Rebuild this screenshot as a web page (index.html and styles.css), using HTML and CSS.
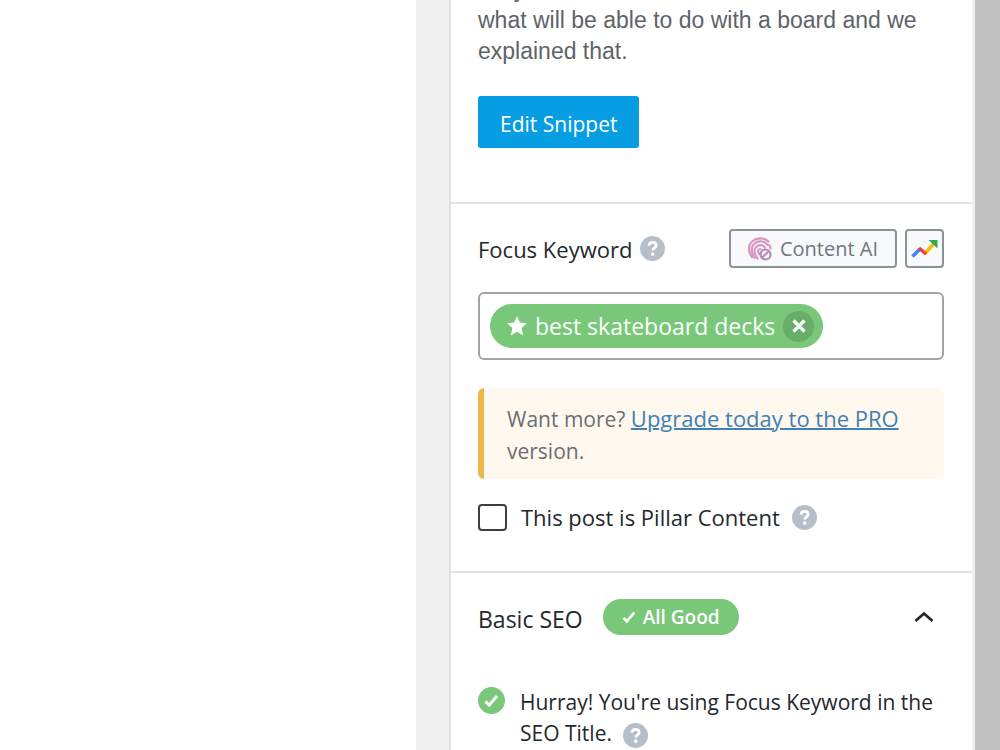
FILE: index.html
```html
<!DOCTYPE html>
<html lang="en">
<head>
  <meta charset="UTF-8" />
  <meta name="viewport" content="width=device-width, initial-scale=1.0"/>
  <title>Edit Post - SEO</title>
  <link rel="stylesheet" href="styles.css">
</head>
<body>

  <!-- Shared icons -->
  <svg class="sprite" aria-hidden="true">
    <symbol id="icon-help" viewBox="0 0 24 24">
      <circle cx="12" cy="12" r="12" fill="#b5bfc9"/>
      <path d="M8.6 9.2C8.8 7.1 10.2 6.1 12.1 6.1c2 0 3.4 1.1 3.4 2.8 0 2.6-3.2 2.5-3.2 5.1" fill="none" stroke="#fff" stroke-width="2.6"/>
      <circle cx="12.2" cy="17.4" r="1.7" fill="#fff"/>
    </symbol>
    <symbol id="icon-check" viewBox="0 0 16 14">
      <path d="M1.5 8l4 4L14 2" fill="none" stroke="#fff" stroke-width="3.2"/>
    </symbol>
  </svg>

  <div class="layout">
    <main class="editor"></main>

    <aside class="sidebar">
      <section class="snippet">
        <p>Only if, we knew, as the new riders will see what will be able to do with a board and we explained that.</p>
        <button type="button" class="btn-primary">Edit Snippet</button>
      </section>

      <section class="keyword">
        <div class="keyword-head">
          <h2>Focus Keyword</h2>
          <svg class="help"><use href="#icon-help"/></svg>
          <div class="tools">
            <button type="button" class="btn-tool">
              <svg class="ai-icon" viewBox="0 0 24 24" fill="none" stroke-width="2.2" stroke-linecap="round">
                <g stroke="#d795bf">
                  <path d="M4 20C0 15 0 8 4 4.500S15-.500 20.500 4.500"/>
                  <path d="M6.500 21C3 15.500 3 9.500 6.500 6.500S16.500 3.500 20 8"/>
                  <path d="M9.500 21.500C6 17 5.500 12 8.500 9.500s7-1.500 8.500 1"/>
                  <path d="M11 17c-2-3-.500-5 1.500-5"/>
                  <path d="M21.500 8.500c.800 1 1 2 1 3"/>
                </g>
                <g stroke="#b78abc">
                  <circle cx="17.500" cy="17.500" r="5"/>
                  <path d="M14.500 20l5.500-5"/>
                </g>
              </svg>
              Content AI
            </button>
            <button type="button" class="btn-tool btn-trends" aria-label="Trends">
              <svg class="trends-icon" viewBox="0 0 27 20" fill="none" stroke-width="3.600">
                <path d="M1.500 17.500L9 10" stroke="#4285f4"/>
                <path d="M13.500 15l9-10" stroke="#fbbc04"/>
                <path d="M8 9l7 6" stroke="#ea4335"/>
                <path d="M17.500 1H26.500V9.500z" fill="#34a853"/>
              </svg>
            </button>
          </div>
        </div>

        <div class="keyword-box">
          <span class="tag">
            <svg class="star" viewBox="0 0 20 20"><path d="M10 0l2.900 6.600 7.100.700-5.400 4.800L16.200 19.500 10 15.700 3.800 19.500l1.600-7.400L0 7.300l7.100-.700z" fill="#fff"/></svg>
            best skateboard decks
            <button type="button" class="tag-remove" aria-label="Remove keyword">
              <svg viewBox="0 0 14 14"><path d="M1.500 1.500l11 11M12.500 1.500l-11 11" stroke="#fff" stroke-width="3.200"/></svg>
            </button>
          </span>
        </div>

        <p class="notice">Want more? <a href="#">Upgrade today to the PRO</a> version.</p>

        <div class="pillar">
          <input type="checkbox" id="pillar-content">
          <label for="pillar-content">This post is Pillar Content</label>
          <svg class="help"><use href="#icon-help"/></svg>
        </div>
      </section>

      <section class="basic">
        <div class="basic-head">
          <h2>Basic SEO</h2>
          <span class="badge"><svg><use href="#icon-check"/></svg>All Good</span>
          <button type="button" class="toggle" aria-label="Toggle panel">
            <svg viewBox="0 0 20 12"><path d="M1.500 10L10 2.500 18.500 10" fill="none" stroke="#23282d" stroke-width="2.800"/></svg>
          </button>
        </div>
        <ul class="tests">
          <li>
            <span class="test-ok"><svg><use href="#icon-check"/></svg></span>
            <span>Hurray! You're using Focus Keyword in the SEO Title. <svg class="help"><use href="#icon-help"/></svg></span>
          </li>
        </ul>
      </section>
    </aside>

    <div class="scrollbar"></div>
  </div>

</body>
</html>
```

FILE: styles.css
```css
* {
  box-sizing: border-box;
}

body {
  margin: 0;
  font-family: 'Segoe UI', 'Open Sans', sans-serif;
  font-size: 22px;
  line-height: 32px;
  background: #fff;
  color: #23282d;
}

h2, p, ul {
  margin: 0;
  padding: 0;
}

h2 {
  font-size: 22px;
  font-weight: 500;
}

button {
  font-family: inherit;
  font-size: 21px;
  padding: 0;
  border: none;
  cursor: pointer;
}

svg {
  display: block;
  flex: none;
}

.sprite {
  position: absolute;
  width: 0;
  height: 0;
}

.layout {
  display: flex;
  height: 100vh;
  overflow: hidden;
}

.editor {
  flex: 1;
  border-right: 33px solid #f0f0f0;
}

.sidebar {
  width: 526px;
  border-left: 2px solid #e0e0e0;
  border-right: 3px solid #f0f0f0;
}

.scrollbar {
  width: 25px;
  background: #c1c1c1;
}

section {
  padding: 0 28px 0 27px;
}

section + section {
  border-top: 2px solid #e2e4e7;
}

.help {
  width: 25px;
  height: 25px;
}

/* Snippet preview */
.snippet {
  margin-top: -26px;
  padding-bottom: 54px;
}

.snippet p {
  font-family: 'Liberation Sans', Arial, sans-serif;
  font-size: 23px;
  line-height: 31px;
  color: #5f6368;
}

.btn-primary {
  margin-top: 29px;
  padding: 4px 22px 0;
  height: 52px;
  background: #069de3;
  color: #fff;
  border-radius: 3px;
}

/* Focus keyword */
.keyword {
  padding-top: 25px;
  padding-bottom: 38px;
}

.keyword-head {
  display: flex;
  align-items: center;
  gap: 8px;
}

.tools {
  display: flex;
  gap: 8px;
  margin-left: auto;
}

.btn-tool {
  display: flex;
  align-items: center;
  gap: 8px;
  height: 39px;
  padding: 0 17px;
  background: #f8f9fa;
  border: 2px solid #8c929c;
  border-radius: 4px;
  color: #6c7781;
  font-size: 20px;
}

.btn-trends {
  padding: 0 4px;
}

.ai-icon {
  width: 24px;
  height: 24px;
}

.trends-icon {
  width: 27px;
  height: 20px;
}

.keyword-box {
  display: flex;
  margin-top: 24px;
  padding: 10px;
  border: 2px solid #a0a3ae;
  border-radius: 6px;
}

.tag {
  display: flex;
  align-items: center;
  gap: 8px;
  height: 44px;
  padding: 0 9px 0 17px;
  border-radius: 22px;
  background: #79c879;
  color: #fff;
  font-size: 23px;
}

.star {
  width: 20px;
  height: 20px;
}

.tag-remove {
  display: flex;
  align-items: center;
  justify-content: center;
  width: 31px;
  height: 31px;
  border-radius: 50%;
  background: #68ad68;
}

.tag-remove svg {
  width: 14px;
  height: 14px;
}

.notice {
  margin-top: 28px;
  padding: 14px 20px 12px 23px;
  border-left: 6px solid #efb64c;
  border-radius: 6px;
  background: #fef8ee;
  color: #6b6f73;
  font-size: 21px;
}

.notice a {
  color: #4180b5;
  font-size: 22px;
  font-weight: 500;
  text-decoration-thickness: 2px;
}

.pillar {
  display: flex;
  align-items: center;
  margin-top: 22px;
}

.pillar input {
  appearance: none;
  width: 29px;
  height: 27px;
  margin: 0 14px 0 0;
  border: 2px solid #3c4043;
  border-radius: 4px;
  background: #fff;
}

.pillar label {
  margin-right: 12px;
  font-weight: 500;
}

/* Basic SEO */
.basic {
  padding-top: 26px;
}

.basic-head {
  display: flex;
  align-items: center;
}

.basic-head h2 {
  padding-top: 4px;
  font-size: 23px;
}

.badge {
  display: flex;
  align-items: center;
  gap: 7px;
  height: 36px;
  margin-left: 20px;
  padding: 0 19px;
  border-radius: 18px;
  background: #79c879;
  color: #fff;
  font-size: 19px;
  font-weight: 600;
}

.badge svg {
  width: 14px;
  height: 12px;
}

.toggle {
  margin-left: auto;
  padding: 10px;
  background: none;
}

.toggle svg {
  width: 20px;
  height: 12px;
}

.tests {
  margin-top: 52px;
  list-style: none;
}

.tests li {
  display: flex;
  gap: 15px;
  font-size: 21px;
  line-height: 31px;
}

.test-ok {
  display: flex;
  flex: none;
  align-items: center;
  justify-content: center;
  width: 27px;
  height: 27px;
  border-radius: 50%;
  background: #79c879;
}

.test-ok svg {
  width: 15px;
  height: 13px;
}

.tests .help {
  display: inline-block;
  margin-left: 6px;
  vertical-align: middle;
}
```
